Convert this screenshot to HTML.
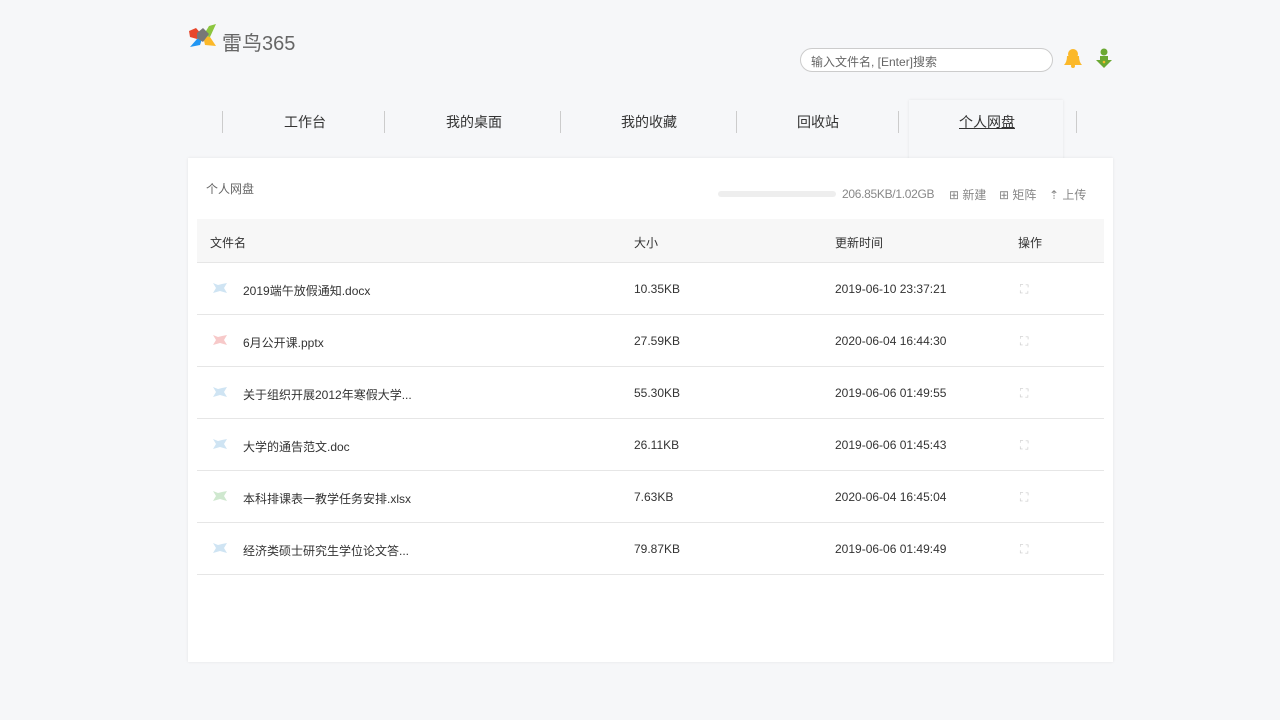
<!DOCTYPE html>
<html><head><meta charset="utf-8"><style>
*{margin:0;padding:0;box-sizing:border-box}
body{width:1280px;height:720px;background:#f6f7f9;font-family:"Liberation Sans","Noto Sans CJK SC",sans-serif;color:#333;position:relative;overflow:hidden}
.abs{position:absolute}
.tab{position:absolute;top:112px;font-size:14px;color:#333}
.sep{position:absolute;top:111px;width:1px;height:22px;background:#ccc}
.panel{position:absolute;left:188px;top:158px;width:925px;height:504px;background:#fff;box-shadow:0 0 3px rgba(0,0,0,.08)}
.row{position:absolute;left:9px;width:907px;height:52px;border-bottom:1px solid #e6e6e6;font-size:12px;color:#333}
.row span{position:absolute;top:19px}
.row svg{position:absolute;left:15px;top:19px}
</style></head><body>
<svg class="abs" style="left:188px;top:23px" width="30" height="26" viewBox="0 0 30 26">
<path d="M1 8 L8 5 L15 13 L9 16 L2 14 Z" fill="#e8472c"/>
<path d="M28 1 L21 3 L15 13 L22 14 Z" fill="#8cc63f"/>
<path d="M2 24 L9 16 L15 13 L12 22 Z" fill="#2196f3"/>
<path d="M15 13 L22 14 L28 23 L17 22 Z" fill="#fbb829"/>
<path d="M9 10 L15 5 L21 11 L15 19 L9 15 Z" fill="#777"/>
</svg>
<div class="abs" style="left:222px;top:27px;font-size:20px;color:#666">雷鸟365</div>
<div class="abs" style="left:800px;top:48px;width:253px;height:24px;border:1px solid #ccc;border-radius:12px;background:#fff;font-size:12px;color:#666;padding:4px 0 0 10px">输入文件名, [Enter]搜索</div>
<svg class="abs" style="left:1063px;top:48px" width="20" height="22" viewBox="0 0 20 22"><circle cx="10" cy="6" r="5" fill="#fbb829"/><path d="M4 8 Q4 14 1 17 L19 17 Q16 14 16 8Z" fill="#fbb829"/><circle cx="10" cy="18" r="2" fill="#fbb829"/></svg>
<svg class="abs" style="left:1095px;top:48px" width="18" height="22" viewBox="0 0 18 22"><circle cx="9" cy="4" r="3.5" fill="#6aa832"/><path d="M5 8 H13 V12 H17 L9 20 L1 12 H5Z" fill="#6aa832"/><circle cx="9" cy="14" r="1.3" fill="#fbb829"/></svg>
<div class="sep" style="left:222px"></div><div class="sep" style="left:384px"></div><div class="sep" style="left:560px"></div><div class="sep" style="left:736px"></div><div class="sep" style="left:898px"></div><div class="sep" style="left:1076px"></div>
<div class="abs" style="left:909px;top:100px;width:154px;height:60px;background:#f6f7f9;box-shadow:0 0 3px rgba(0,0,0,.08)"></div>
<div class="tab" style="left:284px">工作台</div>
<div class="tab" style="left:446px">我的桌面</div>
<div class="tab" style="left:621px">我的收藏</div>
<div class="tab" style="left:797px">回收站</div>
<div class="tab" style="left:959px;text-decoration:underline">个人网盘</div>
<div class="panel">
<div class="abs" style="left:18px;top:22px;font-size:12px;color:#666">个人网盘</div>
<div class="abs" style="left:530px;top:33px;width:118px;height:6px;border-radius:3px;background:#eee"></div>
<div class="abs" style="left:654px;top:29px;font-size:12px;color:#888;letter-spacing:-0.3px">206.85KB/1.02GB</div>
<div class="abs" style="left:761px;top:28px;font-size:12px;color:#888">⊞ 新建</div>
<div class="abs" style="left:811px;top:28px;font-size:12px;color:#888">⊞ 矩阵</div>
<div class="abs" style="left:861px;top:28px;font-size:12px;color:#888">⇡ 上传</div>
<div class="abs" style="left:9px;top:61px;width:907px;height:44px;background:#f7f7f7;border-bottom:1px solid #e6e6e6;font-size:12px">
<span class="abs" style="left:13px;top:15px">文件名</span><span class="abs" style="left:437px;top:15px">大小</span><span class="abs" style="left:638px;top:15px">更新时间</span><span class="abs" style="left:821px;top:15px">操作</span></div>
<div class="row" style="top:105px"><svg width="16" height="12"><path d="M1 1 L6 3 L10 2 L15 1 L12 6 L15 11 L8 9 L1 11 L4 6Z" fill="#cfe4f3"/></svg><span style="left:46px">2019端午放假通知.docx</span><span style="left:437px">10.35KB</span><span style="left:638px">2019-06-10 23:37:21</span><span style="left:823px;color:#ccc">⛶</span></div>
<div class="row" style="top:157px"><svg width="16" height="12"><path d="M1 1 L6 3 L10 2 L15 1 L12 6 L15 11 L8 9 L1 11 L4 6Z" fill="#f7c9c9"/></svg><span style="left:46px">6月公开课.pptx</span><span style="left:437px">27.59KB</span><span style="left:638px">2020-06-04 16:44:30</span><span style="left:823px;color:#ccc">⛶</span></div>
<div class="row" style="top:209px"><svg width="16" height="12"><path d="M1 1 L6 3 L10 2 L15 1 L12 6 L15 11 L8 9 L1 11 L4 6Z" fill="#cfe4f3"/></svg><span style="left:46px">关于组织开展2012年寒假大学...</span><span style="left:437px">55.30KB</span><span style="left:638px">2019-06-06 01:49:55</span><span style="left:823px;color:#ccc">⛶</span></div>
<div class="row" style="top:261px"><svg width="16" height="12"><path d="M1 1 L6 3 L10 2 L15 1 L12 6 L15 11 L8 9 L1 11 L4 6Z" fill="#cfe4f3"/></svg><span style="left:46px">大学的通告范文.doc</span><span style="left:437px">26.11KB</span><span style="left:638px">2019-06-06 01:45:43</span><span style="left:823px;color:#ccc">⛶</span></div>
<div class="row" style="top:313px"><svg width="16" height="12"><path d="M1 1 L6 3 L10 2 L15 1 L12 6 L15 11 L8 9 L1 11 L4 6Z" fill="#cfe8cf"/></svg><span style="left:46px">本科排课表一教学任务安排.xlsx</span><span style="left:437px">7.63KB</span><span style="left:638px">2020-06-04 16:45:04</span><span style="left:823px;color:#ccc">⛶</span></div>
<div class="row" style="top:365px"><svg width="16" height="12"><path d="M1 1 L6 3 L10 2 L15 1 L12 6 L15 11 L8 9 L1 11 L4 6Z" fill="#cfe4f3"/></svg><span style="left:46px">经济类硕士研究生学位论文答...</span><span style="left:437px">79.87KB</span><span style="left:638px">2019-06-06 01:49:49</span><span style="left:823px;color:#ccc">⛶</span></div>
</div>
</body></html>
